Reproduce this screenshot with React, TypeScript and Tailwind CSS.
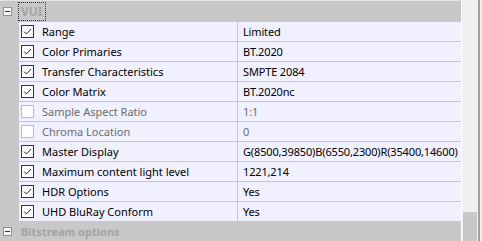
import React from "react";

type Row = { label: string; value: string; checked: boolean; enabled: boolean };

const rows: Row[] = [
  { label: "Range", value: "Limited", checked: true, enabled: true },
  { label: "Color Primaries", value: "BT.2020", checked: true, enabled: true },
  { label: "Transfer Characteristics", value: "SMPTE 2084", checked: true, enabled: true },
  { label: "Color Matrix", value: "BT.2020nc", checked: true, enabled: true },
  { label: "Sample Aspect Ratio", value: "1:1", checked: false, enabled: false },
  { label: "Chroma Location", value: "0", checked: false, enabled: false },
  { label: "Master Display", value: "G(8500,39850)B(6550,2300)R(35400,14600)", checked: true, enabled: true },
  { label: "Maximum content light level", value: "1221,214", checked: true, enabled: true },
  { label: "HDR Options", value: "Yes", checked: true, enabled: true },
  { label: "UHD BluRay Conform", value: "Yes", checked: true, enabled: true },
];

function MinusBox() {
  return (
    <div className="w-[9px] h-[9px] border border-[#919191] bg-[#f7f7f7] flex items-center justify-center shrink-0">
      <div className="w-[5px] h-px bg-[#333]" />
    </div>
  );
}

function CheckBox({ checked, enabled }: { checked: boolean; enabled: boolean }) {
  return (
    <div
      className={`w-[13px] h-[13px] border bg-white shrink-0 ${
        enabled ? "border-[#333]" : "border-[#bcbcbc]"
      }`}
    >
      {checked && (
        <svg width="11" height="11" viewBox="0 0 11 11">
          <path d="M2 5.5 L4.5 8 L9 3" fill="none" stroke="#222" strokeWidth="1" />
        </svg>
      )}
    </div>
  );
}

export default function App() {
  return (
    <div
      className="w-[482px] h-[241px] bg-white flex overflow-hidden text-[11px]"
      style={{ fontFamily: '"Noto Sans", "Open Sans", sans-serif' }}
    >
      <div className="w-[461px] flex flex-col shrink-0">
        <div className="h-px bg-[#e4e4e4]" />
        {/* VUI group header */}
        <div className="h-[21px] bg-[#c8c8c8] flex items-center pl-[3px]">
          <MinusBox />
          <div className="ml-[6px] h-[19px] px-[2px] border border-dotted border-[#333] flex items-center font-bold text-[12px] text-[#a3a3a3] leading-none">
            VUI
          </div>
        </div>
        {rows.map((r) => (
          <div key={r.label} className="h-[20px] flex bg-[#c8c8c8]">
            <div className="w-[19px] shrink-0" />
            <div className="flex-1 flex bg-[#f0f0ff] border-b border-[#c6c6cc]">
              <div className="w-[219px] shrink-0 flex items-center pl-[2px] border-r border-[#c6c6cc]">
                <CheckBox checked={r.checked} enabled={r.enabled} />
                <span
                  className={`ml-[8px] leading-none whitespace-nowrap ${
                    r.enabled ? "text-[#000]" : "text-[#6d6d6d]"
                  }`}
                >
                  {r.label}
                </span>
              </div>
              <div
                className={`flex-1 flex items-center pl-[5px] whitespace-nowrap overflow-hidden leading-none tracking-[-0.15px] ${
                  r.enabled ? "text-[#000]" : "text-[#6d6d6d]"
                }`}
              >
                {r.value}
              </div>
            </div>
          </div>
        ))}
        {/* Bitstream group header */}
        <div className="flex-1 bg-[#c8c8c8] flex items-start pt-[5px] pl-[3px]">
          <MinusBox />
          <div className="ml-[9px] -mt-[2px] font-bold text-[#a3a3a3] leading-none pt-[1px]">
            Bitstream options
          </div>
        </div>
      </div>
      <div className="w-px bg-white shrink-0" />
      <div className="w-[16px] bg-[#f0f0f0] flex flex-col justify-end shrink-0">
        <div className="h-[29px] mx-[1px] bg-[#c8c8c8]" />
      </div>
      <div className="w-[2px] bg-[#a0a0a0] shrink-0" />
      <div className="flex-1 bg-[#f0f0f0]" />
    </div>
  );
}
